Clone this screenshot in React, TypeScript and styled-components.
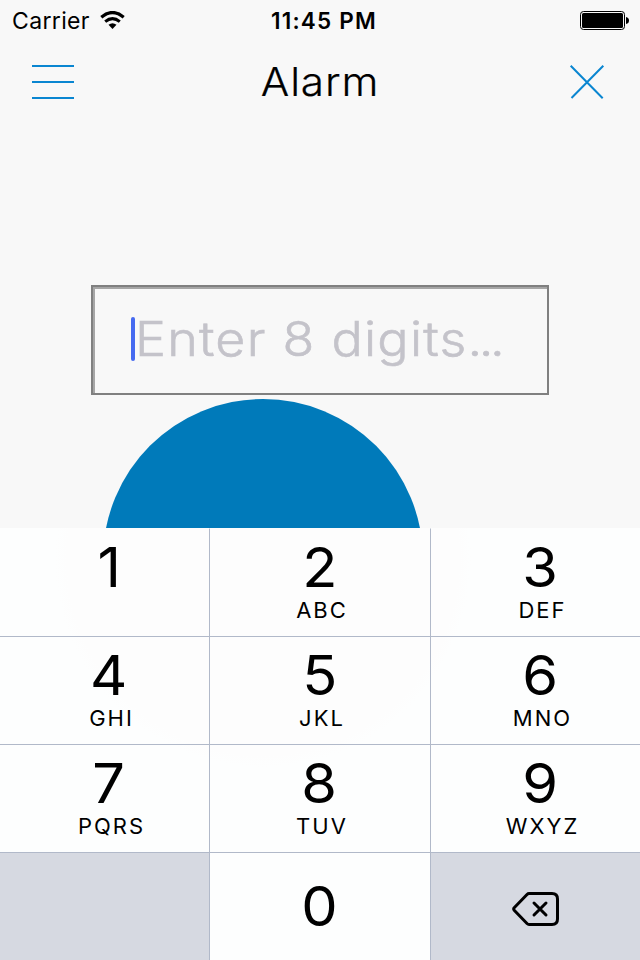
import React from 'react';
import styled, { createGlobalStyle } from 'styled-components';

const GlobalStyle = createGlobalStyle`
  * { box-sizing: border-box; }
  body { margin: 0; background: #f8f8f8; font-family: Inter, "Liberation Sans", sans-serif; color: #000; }
`;

const Screen = styled.div`
  width: 640px;
  height: 960px;
  display: flex;
  flex-direction: column;
  overflow: hidden;
  background: #f8f8f8;
`;

const StatusBar = styled.header`
  height: 40px;
  flex: none;
  display: grid;
  grid-template-columns: 1fr auto 1fr;
  align-items: center;
  padding: 1px 11px 0 12px;
  font-size: 23px;
  line-height: 28px;
`;

const Carrier = styled.div`
  display: flex;
  align-items: center;
  gap: 10px;
  letter-spacing: 0.35px;
`;

const Clock = styled.div`
  font-size: 22.5px;
  font-weight: 600;
  letter-spacing: 1.2px;
  padding-left: 7px;
`;

const Battery = styled.svg`
  justify-self: end;
  display: block;
`;

const NavBar = styled.nav`
  height: 84px;
  flex: none;
  display: grid;
  grid-template-columns: 42px 1fr 42px;
  align-items: center;
  padding: 0 32px;
`;

const NavButton = styled.button`
  width: 42px;
  height: 42px;
  padding: 0;
  border: 0;
  background: none;
  svg { display: block; }
`;

const Title = styled.h1`
  margin: 0;
  font-size: 39.5px;
  font-weight: 300;
  line-height: 50px;
  letter-spacing: 0.8px;
  text-align: center;
  transform: scaleX(1.07);
  -webkit-text-stroke: 0.2px #000;
`;

const Content = styled.main`
  height: 404px;
  flex: none;
  overflow: hidden;
  padding: 161px 91px 0;
`;

const CodeField = styled.div`
  width: 458px;
  height: 110px;
  display: flex;
  align-items: center;
  padding: 0 38px;
  border: 2px solid #808080;
  box-shadow: inset 2px 2px 0 #a6a6a6;
`;

const Caret = styled.span`
  width: 4px;
  height: 44px;
  flex: none;
  margin-top: -2px;
  border-radius: 2px;
  background: #466af0;
`;

const Placeholder = styled.span`
  margin: -2px 0 0 -0.5px;
  font-size: 48px;
  font-weight: 300;
  line-height: 60px;
  letter-spacing: 1.15px;
  white-space: pre;
  color: #c4c3ca;
  -webkit-text-stroke: 0.6px #c4c3ca;
  transform: scaleX(1.083);
  transform-origin: left center;
`;

const Ellipsis = styled.span`
  letter-spacing: -3.2px;
`;

const Dial = styled.div`
  width: 320px;
  height: 320px;
  margin: 4px 0 0 12px;
  border-radius: 50%;
  background: #007aba;
`;

const Keypad = styled.section`
  height: 432px;
  flex: none;
  display: grid;
  grid-template-columns: 209px 221px 210px;
  grid-template-rows: repeat(4, 108px);
  background: radial-gradient(circle at 263px 31px, #fdfdfd 196px, #fdfefe 208px);
`;

const Key = styled.button<{ $col: number; $row: number; $muted?: boolean }>`
  display: flex;
  flex-direction: column;
  align-items: center;
  margin: 0;
  padding: ${p => (p.$row === 3 ? 25 : 10)}px 0 0 ${p => [10, 0, 10][p.$col]}px;
  border: 0 solid #b1b9c9;
  border-top: 1px solid ${p => (p.$row === 0 ? 'transparent' : '#b1b9c9')};
  border-left-width: ${p => (p.$col === 0 ? 0 : 1)}px;
  background: ${p => (p.$muted ? '#d6d9e1' : 'transparent')};
  color: #000;
  font-family: inherit;
`;

const Digit = styled.span`
  margin-left: -1px;
  font-size: 55px;
  line-height: 56px;
  transform: scaleX(1.05);
`;

const Letters = styled.span`
  margin-top: 3px;
  padding-left: 4px;
  font-size: 22px;
  line-height: 24px;
  letter-spacing: 2px;
`;

const Delete = styled.svg`
  display: block;
  margin: 13px 0 0 -9px;
`;

const keys = [
  ['1', ''], ['2', 'ABC'], ['3', 'DEF'],
  ['4', 'GHI'], ['5', 'JKL'], ['6', 'MNO'],
  ['7', 'PQRS'], ['8', 'TUV'], ['9', 'WXYZ'],
];

export default function App() {
  return (
    <>
      <GlobalStyle />
      <Screen>
        <StatusBar>
          <Carrier>
            <span>Carrier</span>
            <svg width="25" height="19" viewBox="0 0 25 19">
              <path d="M1.3 6.2 Q12.5 -3.2 23.7 6.2" fill="none" stroke="#000" strokeWidth="3.2" />
              <path d="M5.2 10.6 Q12.5 4.6 19.8 10.6" fill="none" stroke="#000" strokeWidth="3" />
              <path d="M8.5 13.8 Q12.5 10.5 16.5 13.8 L12.5 18 Z" />
            </svg>
          </Carrier>
          <Clock>11:45 PM</Clock>
          <Battery width="49" height="19" viewBox="0 0 49 19">
            <rect x="0.5" y="0.5" width="44" height="18" rx="3" fill="none" stroke="#000" />
            <rect x="2" y="2" width="41" height="15" rx="1.5" />
            <path d="M46 6 Q49 6.5 49 9.5 Q49 12.5 46 13 Z" />
          </Battery>
        </StatusBar>
        <NavBar>
          <NavButton aria-label="Menu">
            <svg width="42" height="42" viewBox="0 0 42 42">
              <path d="M0 5H42M0 21H42M0 37H42" stroke="#0a86d1" strokeWidth="2" />
            </svg>
          </NavButton>
          <Title>Alarm</Title>
          <NavButton aria-label="Close">
            <svg width="42" height="42" viewBox="0 0 42 42">
              <path d="M4.7 4.7L36.7 37.3M37.3 4.7L5.5 37" stroke="#0a86d1" strokeWidth="2" />
            </svg>
          </NavButton>
        </NavBar>
        <Content>
          <CodeField>
            <Caret />
            <Placeholder>Enter 8 digits<Ellipsis>...</Ellipsis></Placeholder>
          </CodeField>
          <Dial />
        </Content>
        <Keypad>
          {keys.map(([digit, letters], i) => (
            <Key key={digit} $col={i % 3} $row={Math.floor(i / 3)}>
              <Digit>{digit}</Digit>
              {letters && <Letters>{letters}</Letters>}
            </Key>
          ))}
          <Key $col={0} $row={3} $muted aria-label="Blank" />
          <Key $col={1} $row={3}><Digit>0</Digit></Key>
          <Key $col={2} $row={3} $muted aria-label="Delete">
            <Delete width="48" height="36" viewBox="0 0 48 36" fill="none" stroke="#000" strokeWidth="3" strokeLinecap="round" strokeLinejoin="round">
              <path d="M17 2.5H40Q45.5 2.5 45.5 8V28Q45.5 33.5 40 33.5H17Q16 33.5 15 32.5L2.2 19.2Q1.2 18 2.2 16.8L15 3.5Q16 2.5 17 2.5Z" />
              <path d="M22 12L34 24M34 12L22 24" />
            </Delete>
          </Key>
        </Keypad>
      </Screen>
    </>
  );
}
